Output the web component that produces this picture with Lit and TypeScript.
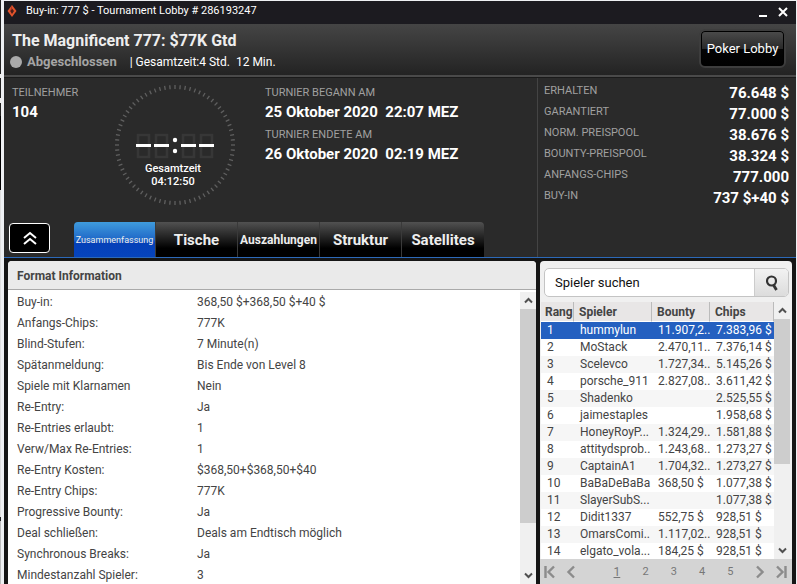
import { LitElement, html, css, svg } from "lit";
import { customElement, state } from "lit/decorators.js";
import { classMap } from "lit/directives/class-map.js";

const FORMAT: [string, string][] = [
  ["Buy-in:", "368,50 $+368,50 $+40 $"],
  ["Anfangs-Chips:", "777K"],
  ["Blind-Stufen:", "7 Minute(n)"],
  ["Spätanmeldung:", "Bis Ende von Level 8"],
  ["Spiele mit Klarnamen", "Nein"],
  ["Re-Entry:", "Ja"],
  ["Re-Entries erlaubt:", "1"],
  ["Verw/Max Re-Entries:", "1"],
  ["Re-Entry Kosten:", "$368,50+$368,50+$40"],
  ["Re-Entry Chips:", "777K"],
  ["Progressive Bounty:", "Ja"],
  ["Deal schließen:", "Deals am Endtisch möglich"],
  ["Synchronous Breaks:", "Ja"],
  ["Mindestanzahl Spieler:", "3"],
];

const PLAYERS: [string, string, string][] = [
  ["hummylun", "11.907,2..", "7.383,96 $"],
  ["MoStack", "2.470,11..", "7.376,14 $"],
  ["Scelevco", "1.727,34..", "5.145,26 $"],
  ["porsche_911", "2.827,08..", "3.611,42 $"],
  ["Shadenko", "", "2.525,55 $"],
  ["jaimestaples", "", "1.958,68 $"],
  ["HoneyRoyP...", "1.324,29..", "1.581,88 $"],
  ["attitydsprob..", "1.243,68..", "1.273,27 $"],
  ["CaptainA1", "1.704,32..", "1.273,27 $"],
  ["BaBaDeBaBa", "368,50 $", "1.077,38 $"],
  ["SlayerSubS...", "", "1.077,38 $"],
  ["Didit1337", "552,75 $", "928,51 $"],
  ["OmarsComi..", "1.117,02..", "928,51 $"],
  ["elgato_vola...", "184,25 $", "928,51 $"],
];

const PRIZES: [string, string][] = [
  ["ERHALTEN", "76.648 $"],
  ["GARANTIERT", "77.000 $"],
  ["NORM. PREISPOOL", "38.676 $"],
  ["BOUNTY-PREISPOOL", "38.324 $"],
  ["ANFANGS-CHIPS", "777.000"],
  ["BUY-IN", "737 $+40 $"],
];

const TABS = [
  { label: "Zusammenfassung", size: "small" },
  { label: "Tische", size: "large" },
  { label: "Auszahlungen", size: "medium" },
  { label: "Struktur", size: "large" },
  { label: "Satellites", size: "large" },
];

@customElement("scroll-rail")
class ScrollRail extends LitElement {
  static styles = css`
    :host { display: flex; flex-direction: column; width: 16px; background: #f0f0f0; }
    .arrow { height: 17px; flex: none; padding: 0; border: 0; background: #f0f0f0; display: grid; place-items: center; }
    .track { flex: 1; min-height: 0; }
    .thumb { height: var(--thumb, 83%); background: #cdcdcd; }
    path { fill: none; stroke: #505050; stroke-width: 2; }
  `;
  render() {
    return html`
      <button class="arrow" aria-label="Nach oben"><svg width="9" height="7"><path d="M1 5.5 4.5 2 8 5.5" /></svg></button>
      <div class="track"><div class="thumb"></div></div>
      <button class="arrow" aria-label="Nach unten"><svg width="9" height="7"><path d="M1 1.5 4.5 5 8 1.5" /></svg></button>
    `;
  }
}

@customElement("time-dial")
class TimeDial extends LitElement {
  static styles = css`
    :host { display: block; }
    svg { display: block; }
    .tick { stroke: #606060; stroke-width: 1.3; }
    .off { fill: none; stroke: #373737; stroke-width: 2.6; }
    .on { stroke: #fff; stroke-width: 3; }
    .dot { fill: #fff; }
    text { font: 500 11px Roboto, "Liberation Sans", sans-serif; fill: #fff; text-anchor: middle; }
  `;
  render() {
    const ticks = Array.from({ length: 72 }, (_, i) => {
      const a = (i * 5 * Math.PI) / 180;
      const c = Math.cos(a), s = Math.sin(a);
      return svg`<line class="tick" x1=${60 + 56 * c} y1=${60 + 56 * s} x2=${60 + 60 * c} y2=${60 + 60 * s} />`;
    });
    return html`<svg width="120" height="120" viewBox="0 0 120 120" role="img" aria-label="Gesamtzeit 04:12:50">
      ${ticks}
      ${[21, 39, 66, 84].map((x) => svg`
        <path class="off" d="M${x + 2} 50h11v22h-11zM${x + 2} 61h11" />
        <line class="on" x1=${x} y1="60.5" x2=${x + 15} y2="60.5" />`)}
      <circle class="dot" cx="60" cy="55" r="2.2" />
      <circle class="dot" cx="60" cy="66" r="2.2" />
      <text x="58" y="87">Gesamtzeit</text>
      <text x="58" y="100">04:12:50</text>
    </svg>`;
  }
}

@customElement("app-root")
class AppRoot extends LitElement {
  @state() private tab = 0;
  @state() private selected = 0;

  static styles = css`
    :host { display: block; box-sizing: border-box; height: 100vh; padding: 1px 1px 0 4px; overflow: hidden;
      background: linear-gradient(#222 0 74px, #eee 74px 78px, #222 78px 98px, #eee 98px 103px, #222 103px 116px, #000 116px 190px, #ddd 190px 517px, #222 517px 521px, #bbb 521px) 0 0 / 1px 100% no-repeat, #eef0f3;
      font: 12px/16px Roboto, "Liberation Sans", sans-serif; color: #fff; }
    * { box-sizing: border-box; }
    button, input { font: inherit; margin: 0; }
    h1, h2, dl, dd, dt, p { margin: 0; }
    .window { height: 100%; display: flex; flex-direction: column; background: #151515; }

    .titlebar { height: 23px; flex: none; display: flex; align-items: center; padding: 0 8px 4px 3px; background: #1c1b20; font-size: 11px; }
    .titlebar .logo { margin-right: 9px; }
    .titlebar .caption { flex: 1; }
    .titlebar button { border: 0; padding: 0; background: none; margin-left: 10px; display: flex; }

    .header { height: 53px; flex: none; display: flex; justify-content: space-between; align-items: flex-start;
      padding: 5px 10px 0 8px; background: linear-gradient(#454545, #232323); border-bottom: 2px solid #4a4a4a; }
    h1 { font-size: 16px; line-height: 24px; font-weight: 700; color: #eee; }
    .status { display: flex; align-items: center; height: 18px; white-space: pre; font-size: 12px; }
    .bullet { width: 12px; height: 12px; border-radius: 50%; background: #aaa; margin: 0 5px 0 -2px; }
    .state { font-size: 13px; font-weight: 700; color: #a5a5a5; margin-right: 13px; }
    .lobby { width: 87px; height: 39px; border: 2px solid #3d3d3d; border-radius: 6px; padding: 0; color: #fff; font-size: 13px;
      background: linear-gradient(#4c4c4c, #2a2a2a 50%, #050505 51%, #000); box-shadow: inset 0 0 0 1px #000; }

    .info { height: 180px; flex: none; display: flex; background: #2a2a2a; border-top: 1px solid #1a1a1a; }
    .main { flex: 1; display: flex; flex-direction: column; justify-content: space-between; }
    .facts { display: flex; padding: 7px 0 0 8px; }
    .label { font-size: 11px; line-height: 16px; color: #a0a0a0; }
    .value { font-size: 15px; line-height: 22px; font-weight: 700; white-space: pre; }
    .count { width: 103px; }
    .dates { margin-left: 30px; }
    .dates .value { margin-bottom: 4px; }
    .nav { display: flex; align-items: flex-end; padding-left: 5px; }
    .collapse { width: 41px; height: 30px; margin: 0 24px 4px 0; padding: 0; border: 1px solid #fff; border-radius: 4px; background: #000;
      display: grid; place-items: center; }
    .tabs { display: flex; }
    .tab { width: 82px; height: 35px; padding: 0; border: 0; border-right: 1px solid #3a3a3a; color: #eee; font-weight: 700; text-align: center;
      white-space: nowrap; background: linear-gradient(#515151, #1c1c1c 50%, #000 75%); }
    .tab:first-child { border-top-left-radius: 4px; }
    .tab:last-child { border-top-right-radius: 4px; border-right: 0; }
    .tab.active { background: linear-gradient(#3f9bdc, #1f68c8 50%, #0540b8 60%, #0644bc); }
    .tab.small { font-size: 9px; font-weight: 400; }
    .tab.medium { font-size: 12px; }
    .tab.large { font-size: 15px; }
    .prizes { width: 259px; padding: 3px 7px 0 6px; border-left: 1px solid #444; }
    .prize { display: flex; justify-content: space-between; height: 21px; }
    .prize .label { line-height: 20px; }
    .prize .value { line-height: 25px; }

    .body { flex: 1; min-height: 0; display: flex; gap: 4px; padding: 3px 4px 0; border-top: 1px solid #2c69b8; }
    .panel { flex: 1; min-width: 0; display: flex; flex-direction: column; background: #fff; color: #444; border-radius: 4px 4px 0 0; overflow: hidden; }
    h2 { height: 29px; flex: none; padding-left: 9px; font-size: 12px; line-height: 30px; font-weight: 700; background: #eaeaea; border-bottom: 1px solid #aaa; }
    .scroll { flex: 1; min-height: 0; display: flex; }
    .scroll .rail { flex: none; margin-top: 2px; }
    .format { flex: 1; padding: 2px 0 0 9px; }
    .row { display: grid; grid-template-columns: 180px 1fr; line-height: 21px; }

    .side { flex: none; width: 252px; display: flex; flex-direction: column; background: #f0f0f0; color: #444; border-radius: 4px 4px 0 0; overflow: hidden; }
    .search { display: flex; flex: none; height: 29px; margin: 7px 3px 5px 4px; border: 1px solid #c4c4c4; border-radius: 5px; background: #fff; overflow: hidden; }
    .search input { flex: 1; min-width: 0; border: 0; padding: 0 10px; outline: 0; background: none; color: #111; font-size: 13px; }
    .search input::placeholder { color: #111; opacity: 1; }
    .search button { width: 34px; padding: 0; border: 0; border-left: 1px solid #ccc; background: linear-gradient(#f2f2f2, #dcdcdc); display: grid; place-items: center; }
    .listing { flex: 1; min-height: 0; display: flex; padding: 0 2px 0 1px; overflow: hidden; }
    .listing .rail { flex: none; --thumb: 65%; }
    .grid { flex: 1; min-width: 0; overflow: hidden; }
    table { width: 100%; table-layout: fixed; border-collapse: separate; border-spacing: 0; background: #fff; }
    th, td { padding: 0 0 0 6px; text-align: left; white-space: nowrap; overflow: hidden; }
    th { height: 20px; line-height: 18px; font-size: 12px; font-weight: 700; background: #e8e6e6; border-right: 1px solid #bbb; border-bottom: 1px solid #fff; padding-left: 5px; }
    th:first-child { padding-left: 4px; }
    td { height: 17px; line-height: 17px; }
    tbody tr:nth-child(odd) { background: #f6f6f6; }
    tbody tr.chosen { background: #2460c0; color: #fff; }
    .rank { width: 33px; }
    .name { width: 78px; }
    .bounty { width: 58px; }
    .pager { height: 25px; flex: none; display: flex; align-items: center; justify-content: space-between; padding: 0 5px 0 4px; background: #d4d4d4; color: #777; }
    .pager button { border: 0; padding: 0; background: none; display: flex; }
    .pager .group { display: flex; gap: 10px; }
    .pages { display: flex; width: 120px; margin-left: 16px; justify-content: space-between; }
    .pages a { color: #777; text-decoration: none; font-size: 11px; }
    .pages a.current { text-decoration: underline; font-size: 12px; }
    .arrow { fill: none; stroke: #8c8c8c; stroke-width: 2.4; }
  `;

  render() {
    return html`<div class="window">
      <header class="titlebar">
        <svg class="logo" width="10" height="14" viewBox="0 0 10 14"><path d="M5 1 9.5 7 5 13 .5 7z" fill="#e2532b" /><path d="M5 4.5 7 7 5 10 3.2 7z" fill="#4a1d18" /><path d="M5 1v4L3 8z" fill="#a83426" /></svg>
        <span class="caption">Buy-in: 777 $ - Tournament Lobby # 286193247</span>
        <button aria-label="Minimieren"><svg width="10" height="12"><path d="M1 11h8" stroke="#fff" stroke-width="2" /></svg></button>
        <button aria-label="Schließen"><svg width="10" height="12"><path d="m1 3 8 8M9 3l-8 8" stroke="#fff" stroke-width="2" /></svg></button>
      </header>
      <section class="header">
        <div>
          <h1>The Magnificent 777: $77K Gtd</h1>
          <div class="status"><span class="bullet"></span><span class="state">Abgeschlossen</span><span>| Gesamtzeit:4 Std.  12 Min.</span></div>
        </div>
        <button class="lobby">Poker Lobby</button>
      </section>
      <section class="info">
        <div class="main">
          <div class="facts">
            <div class="count"><div class="label">TEILNEHMER</div><div class="value">104</div></div>
            <time-dial></time-dial>
            <div class="dates">
              <div class="label">TURNIER BEGANN AM</div><div class="value">25 Oktober 2020  22:07 MEZ</div>
              <div class="label">TURNIER ENDETE AM</div><div class="value">26 Oktober 2020  02:19 MEZ</div>
            </div>
          </div>
          <nav class="nav">
            <button class="collapse" aria-label="Einklappen"><svg width="14" height="14"><path d="m1 7 6-5 6 5M1 13l6-5 6 5" fill="none" stroke="#fff" stroke-width="2" /></svg></button>
            <div class="tabs" role="tablist">
              ${TABS.map((t, i) => html`<button role="tab" aria-selected=${i === this.tab} class=${classMap({ tab: true, active: i === this.tab, [t.size]: true })}
                @click=${() => (this.tab = i)}>${t.label}</button>`)}
            </div>
          </nav>
        </div>
        <dl class="prizes">${PRIZES.map(([k, v]) => html`<div class="prize"><dt class="label">${k}</dt><dd class="value">${v}</dd></div>`)}</dl>
      </section>
      <main class="body">
        <section class="panel">
          <h2>Format Information</h2>
          <div class="scroll">
            <dl class="format">${FORMAT.map(([k, v]) => html`<div class="row"><dt>${k}</dt><dd>${v}</dd></div>`)}</dl>
            <scroll-rail class="rail"></scroll-rail>
          </div>
        </section>
        <aside class="side">
          <form class="search" @submit=${(e: Event) => e.preventDefault()}>
            <input type="text" aria-label="Spieler suchen" placeholder="Spieler suchen" />
            <button aria-label="Suchen"><svg width="14" height="18"><circle cx="6.5" cy="7" r="4.5" fill="none" stroke="#333" stroke-width="2.2" /><path d="m8.5 11 3 5" stroke="#333" stroke-width="2.8" /></svg></button>
          </form>
          <div class="listing">
            <div class="grid"><table>
              <thead><tr><th class="rank">Rang</th><th class="name">Spieler</th><th class="bounty">Bounty</th><th>Chips</th></tr></thead>
              <tbody>${PLAYERS.map(([n, b, c], i) => html`<tr class=${classMap({ chosen: i === this.selected })} @click=${() => (this.selected = i)}>
                <td>${i + 1}</td><td>${n}</td><td>${b}</td><td>${c}</td></tr>`)}</tbody>
            </table></div>
            <scroll-rail class="rail"></scroll-rail>
          </div>
          <nav class="pager" aria-label="Seiten">
            <div class="group">
              <button aria-label="Erste Seite"><svg class="arrow" width="12" height="14"><path d="M1.5 1v12M10 1.5 4.5 7l5.5 5.5" /></svg></button>
              <button aria-label="Zurück"><svg class="arrow" width="10" height="14"><path d="M8 1.5 2.5 7 8 12.5" /></svg></button>
            </div>
            <div class="pages">${[1, 2, 3, 4, 5].map((p) => html`<a href="#" class=${classMap({ current: p === 1 })}>${p}</a>`)}</div>
            <div class="group">
              <button aria-label="Weiter"><svg class="arrow" width="10" height="14"><path d="M2 1.5 7.5 7 2 12.5" /></svg></button>
              <button aria-label="Letzte Seite"><svg class="arrow" width="12" height="14"><path d="M10.5 1v12M2 1.5 7.5 7 2 12.5" /></svg></button>
            </div>
          </nav>
        </aside>
      </main>
    </div>`;
  }
}
